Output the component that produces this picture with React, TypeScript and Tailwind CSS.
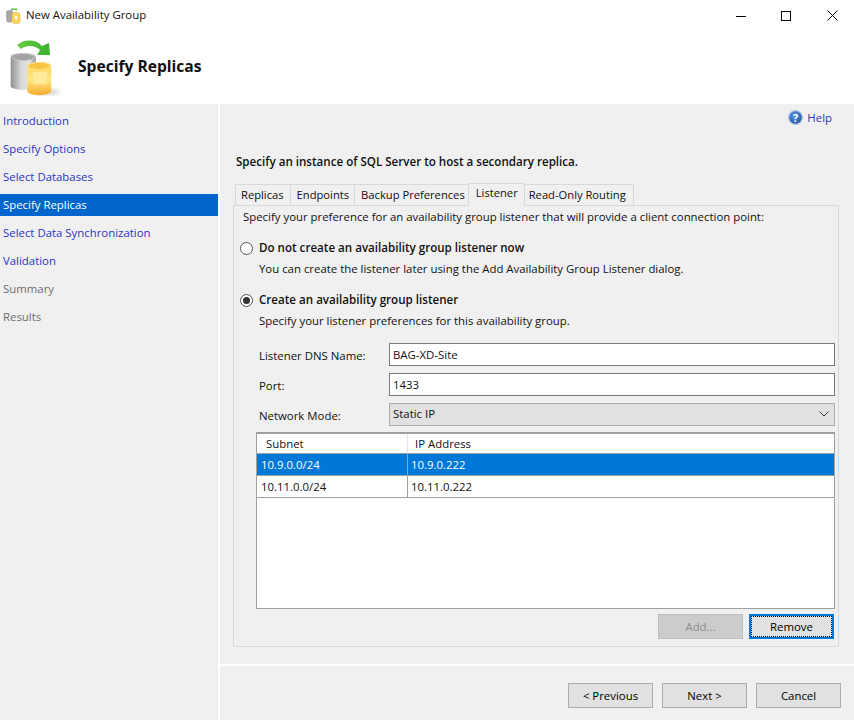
import React from "react";

const font = "font-['Open_Sans','Noto_Sans',sans-serif]";

function DbIcon() {
  return (
    <svg width="64" height="66" viewBox="0 0 64 66">
      <defs>
        <linearGradient id="gray" x1="0" x2="1" y1="0" y2="0">
          <stop offset="0" stopColor="#8f8f8f" />
          <stop offset="0.4" stopColor="#d4d4d4" />
          <stop offset="0.75" stopColor="#e8e8e8" />
          <stop offset="1" stopColor="#909090" />
        </linearGradient>
        <linearGradient id="gold" x1="0" x2="0" y1="0" y2="1">
          <stop offset="0" stopColor="#fbd35e" />
          <stop offset="0.55" stopColor="#ffe680" />
          <stop offset="1" stopColor="#f4ab2c" />
        </linearGradient>
        <linearGradient id="green" x1="0" x2="1" y1="0" y2="0">
          <stop offset="0" stopColor="#63cf45" />
          <stop offset="1" stopColor="#3eb02c" />
        </linearGradient>
        <filter id="soft"><feGaussianBlur stdDeviation="2" /></filter>
      </defs>
      <ellipse cx="42" cy="57" rx="14" ry="3" fill="#999" opacity="0.45" filter="url(#soft)" />
      <path d="M13 10 C20 4 32 4 38 11 L45 8 L46 20 L33 20 L36 15 C31 10 22 10 17 14 Z" fill="url(#green)" />
      <path d="M6.7 22 C6.7 16.5 31.7 16.5 31.7 22 V51 C31.7 56 6.7 56 6.7 51 Z" fill="url(#gray)" />
      <ellipse cx="19.2" cy="22" rx="11.5" ry="3.5" fill="#a3a3a3" stroke="#c8c8c8" strokeWidth="1" />
      <path d="M23.3 31 C23.3 25.5 47.3 25.5 47.3 31 V56 C47.3 61.5 23.3 61.5 23.3 56 Z" fill="url(#gold)" />
      <ellipse cx="35.3" cy="31" rx="11" ry="3.5" fill="#f8c543" stroke="#fde08a" strokeWidth="1" />
      <rect x="29" y="37" width="14" height="12" rx="1" fill="#fff0a8" opacity="0.7" />
    </svg>
  );
}

function SmallIcon() {
  return (
    <svg width="16" height="16" viewBox="0 0 16 16">
      <path d="M5 0.5 H11 V2.5 H9.5 V1.8 H6.5 V2.5 H5 Z" fill="#52b83a" />
      <path d="M0.5 4 C0.5 2 7 2 7 4 V12.5 C7 14.5 0.5 14.5 0.5 12.5 Z" fill="#a8a8a8" stroke="#8a8a8a" strokeWidth="0.5" />
      <path d="M6 6 C6 4 14 4 14 6 V14 C14 16 6 16 6 14 Z" fill="#f9d65c" stroke="#e3aa34" strokeWidth="0.5" />
      <rect x="9" y="8" width="2" height="3" fill="#fff" />
    </svg>
  );
}

function NavItem({ label, state }: { label: string; state?: "active" | "disabled" }) {
  const cls =
    state === "active"
      ? "bg-[#0066cc] text-white"
      : state === "disabled"
        ? "text-[#6d6d6d]"
        : "text-[#2b35c4]";
  return <div className={`h-[22px] pl-[3px] flex items-center ${cls}`}>{label}</div>;
}

function Tab({ label, pad, active }: { label: string; pad: string; active?: boolean }) {
  return active ? (
    <div className={`h-[23px] bg-[#f0f0f0] border border-b-0 border-[#d9d9d9] flex items-center pb-[4px] relative top-[1px] z-10 -ml-px -mr-px ${pad}`}>
      {label}
    </div>
  ) : (
    <div className={`h-[21px] bg-[#f0f0f0] border border-b-0 border-l-0 first:border-l border-[#d9d9d9] flex items-center pb-[1px] ${pad}`}>
      {label}
    </div>
  );
}

function Radio({ checked, label, hint }: { checked?: boolean; label: string; hint: string }) {
  return (
    <div className="pl-[6px]">
      <div className="flex items-center h-[16px]">
        <div className="w-[13px] h-[13px] rounded-full border border-[#555] bg-white flex items-center justify-center mr-[6px]">
          {checked && <div className="w-[7px] h-[7px] rounded-full bg-[#333]" />}
        </div>
        <span className="font-semibold text-[11.6px]">{label}</span>
      </div>
      <div className="pl-[19px] mt-[5px] h-[16px] flex items-center">{hint}</div>
    </div>
  );
}

function FormRow({ label, children }: { label: string; children: React.ReactNode }) {
  return (
    <div className="flex items-center">
      <div className="w-[130px] shrink-0 pt-[2px]">{label}</div>
      {children}
    </div>
  );
}

function TextBox({ value }: { value: string }) {
  return (
    <div className="h-[23px] w-[446px] bg-white border border-[#7a7a7a] px-[3px] flex items-center">{value}</div>
  );
}

function Btn({ label, disabled, focused }: { label: string; disabled?: boolean; focused?: boolean }) {
  const cls = disabled
    ? "bg-[#cccccc] border border-[#bfbfbf] text-[#8c8c8c]"
    : focused
      ? "bg-[#e1e1e1] border-2 border-[#0078d7] text-black"
      : "bg-[#e1e1e1] border border-[#adadad] text-black";
  return (
    <div className={`w-[85px] h-[25px] flex items-center justify-center relative ${cls}`}>
      {label}
      {focused && <div className="absolute inset-0 border border-dotted border-black" />}
    </div>
  );
}

export default function App() {
  return (
    <div className={`w-[854px] h-[720px] bg-white overflow-hidden text-[11.4px] leading-none text-[#111] ${font}`}>
      <div className="h-[31px] flex items-center pl-[6px]">
        <SmallIcon />
        <span className="ml-[4px] mb-[1px]">New Availability Group</span>
        <div className="ml-auto flex items-center mr-[16px] gap-[35px]">
          <svg width="10" height="10" viewBox="0 0 10 10"><path d="M0 5.5H10" stroke="#000" strokeWidth="1" /></svg>
          <svg width="10" height="10" viewBox="0 0 10 10"><rect x="0.5" y="0.5" width="9" height="9" fill="none" stroke="#000" /></svg>
          <svg className="ml-[1px]" width="11" height="11" viewBox="0 0 11 11"><path d="M0.5 0.5L10.5 10.5M10.5 0.5L0.5 10.5" stroke="#000" strokeWidth="1" /></svg>
        </div>
      </div>
      <div className="h-[73px] flex items-center pl-[4px]">
        <DbIcon />
        <span className="ml-[10px] text-[15.6px] font-bold mb-[1px]">Specify Replicas</span>
      </div>
      <div className="flex h-[616px] gap-[2px]">
        <div className="w-[218px] bg-[#f0f0f0] pt-[6px] flex flex-col gap-[6px]">
          <NavItem label="Introduction" />
          <NavItem label="Specify Options" />
          <NavItem label="Select Databases" />
          <NavItem label="Specify Replicas" state="active" />
          <NavItem label="Select Data Synchronization" />
          <NavItem label="Validation" />
          <NavItem label="Summary" state="disabled" />
          <NavItem label="Results" state="disabled" />
        </div>
        <div className="flex-1 bg-[#f0f0f0] flex flex-col">
          <div className="h-[560px] pl-[13px] pr-[15px]">
            <div className="h-[49px] flex justify-end items-start pt-[6px] pr-[7px]">
              <div className="flex items-center gap-[4px] text-[#2b35c4]">
                <svg width="15" height="15" viewBox="0 0 15 15">
                  <defs>
                    <radialGradient id="help" cx="0.4" cy="0.35" r="0.7">
                      <stop offset="0" stopColor="#5d9be0" />
                      <stop offset="1" stopColor="#1d4f9f" />
                    </radialGradient>
                  </defs>
                  <circle cx="7.5" cy="7.5" r="6.8" fill="url(#help)" stroke="#a9c3e3" strokeWidth="1.2" />
                  <text x="7.5" y="11.5" textAnchor="middle" fontSize="11" fontWeight="700" fill="#fff">?</text>
                </svg>
                <span>Help</span>
              </div>
            </div>
            <div className="h-[18px] flex items-center pl-[3px] font-semibold text-[11.6px]">Specify an instance of SQL Server to host a secondary replica.</div>
            <div className="mt-[14px] flex items-end pl-[2px] h-[20px] text-[11.2px]">
              <Tab label="Replicas" pad="pl-[5px] pr-[6px]" />
              <Tab label="Endpoints" pad="pl-[6px] pr-[5px]" />
              <Tab label="Backup Preferences" pad="pl-[6px] pr-[3px]" />
              <Tab label="Listener" active pad="pl-[7px] pr-[6px]" />
              <Tab label="Read-Only Routing" pad="pl-[5px] pr-[7px]" />
            </div>
            <div className="h-[442px] bg-[#f0f0f0] border border-[#d9d9d9] flex flex-col">
              <div className="h-[21px] flex items-center pl-[9px]">Specify your preference for an availability group listener that will provide a client connection point:</div>
              <div className="mt-[13px]"><Radio label="Do not create an availability group listener now" hint="You can create the listener later using the Add Availability Group Listener dialog." /></div>
              <div className="mt-[15px]"><Radio checked label="Create an availability group listener" hint="Specify your listener preferences for this availability group." /></div>
              <div className="mt-[14px] ml-[25px] flex flex-col gap-[7px]">
                <FormRow label="Listener DNS Name:"><TextBox value="BAG-XD-Site" /></FormRow>
                <FormRow label="Port:"><TextBox value="1433" /></FormRow>
                <FormRow label="Network Mode:">
                  <div className="h-[23px] w-[446px] bg-[#e1e1e1] border border-[#adadad] pl-[3px] pr-[5px] pb-[1px] flex items-center justify-between">
                    <span>Static IP</span>
                    <svg width="10" height="6" viewBox="0 0 10 6"><path d="M0.5 0.5L5 5L9.5 0.5" fill="none" stroke="#333" strokeWidth="1" /></svg>
                  </div>
                </FormRow>
              </div>
              <div className="mt-[6px] ml-[22px] w-[579px] h-[177px] bg-white border border-t-2 border-[#a0a0a0]">
                <div className="h-[20px] flex items-center border-b border-[#a0a0a0]">
                  <div className="w-[151px] h-full pl-[9px] pt-[1px] border-r border-[#e5e5e5] flex items-center">Subnet</div>
                  <div className="pl-[7px] pt-[1px]">IP Address</div>
                </div>
                <div className="h-[22px] flex items-center bg-[#0078d7] text-white border-b border-[#a0a0a0]">
                  <div className="w-[151px] h-full pl-[4px] border-r border-[#a0a0a0] flex items-center">10.9.0.0/24</div>
                  <div className="pl-[3px]">10.9.0.222</div>
                </div>
                <div className="h-[22px] flex items-center border-b border-[#a0a0a0]">
                  <div className="w-[151px] h-full pl-[4px] border-r border-[#a0a0a0] flex items-center">10.11.0.0/24</div>
                  <div className="pl-[3px]">10.11.0.222</div>
                </div>
              </div>
              <div className="mt-[5px] flex justify-end gap-[6px] pr-[4px]">
                <Btn label="Add..." disabled />
                <Btn label="Remove" focused />
              </div>
            </div>
          </div>
          <div className="h-[2px] bg-white" />
          <div className="flex-1 flex justify-end items-start pt-[17px] pr-[13px]">
            <div className="mr-[9px]"><Btn label="< Previous" /></div>
            <div className="mr-[9px]"><Btn label="Next >" /></div>
            <Btn label="Cancel" />
          </div>
        </div>
      </div>
    </div>
  );
}
